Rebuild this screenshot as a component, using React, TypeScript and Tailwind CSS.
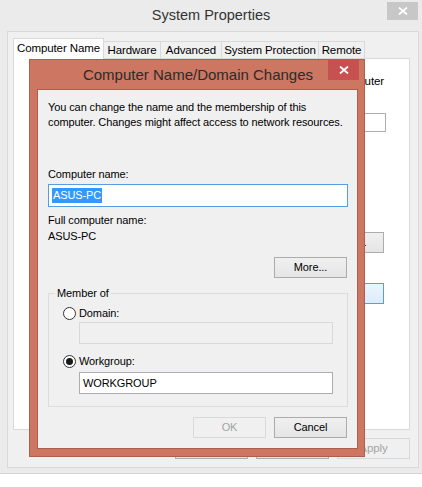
import React from 'react'

function CloseGlyph({ size = 10 }: { size?: number }) {
  return (
    <svg width={size} height={size - 2} viewBox="0 0 10 8" fill="none">
      <path d="M1 0.5 L9 7.5 M9 0.5 L1 7.5" stroke="#ffffff" strokeWidth="1.8" />
    </svg>
  )
}

function Btn({ children, disabled, className = '' }: { children: React.ReactNode; disabled?: boolean; className?: string }) {
  return (
    <div
      className={
        'flex h-[21px] w-[73px] shrink-0 items-center justify-center border ' +
        (disabled
          ? 'border-[#d9d9d9] bg-[#f0f0f0] text-[#a3a3a3] '
          : 'border-[#acacac] bg-linear-to-b from-[#f0f0f0] to-[#e5e5e5] text-black ') +
        className
      }
    >
      {children}
    </div>
  )
}

function Radio({ checked }: { checked?: boolean }) {
  return (
    <div className="flex h-[13px] w-[13px] shrink-0 items-center justify-center rounded-full border border-[#333333] bg-white">
      {checked && <div className="h-[7px] w-[7px] rounded-full bg-[#1a1a1a]" />}
    </div>
  )
}

const tabs = [
  { label: 'Hardware', w: 'w-[57px]' },
  { label: 'Advanced', w: 'w-[61px]' },
  { label: 'System Protection', w: 'w-[97px]' },
  { label: 'Remote', w: 'w-[46px]' },
]

export default function App() {
  return (
    <div className="relative h-[487px] w-[422px] overflow-hidden bg-white font-['Liberation_Sans',Arial,sans-serif] text-[11px] leading-[15px] tracking-[-0.1px] text-black">
      {/* System Properties window (inactive, behind) */}
      <div className="flex h-[474px] flex-col border-b border-[#d4d4d4] bg-[#ebebeb]">
        <div className="relative flex h-[31px] shrink-0 items-center justify-center text-[14.5px] tracking-normal text-[#333333]">
          System Properties
          <div className="absolute right-[4px] top-[2px] flex h-[18px] w-[31px] items-center justify-center bg-[#c7c7c7]">
            <CloseGlyph />
          </div>
        </div>

        <div className="ml-[7px] flex h-[437px] w-[412px] flex-col border border-[#d9d9d9] bg-[#f0f0f0] pb-[8px] pl-[5px] pr-[8px] pt-[6px]">
          {/* tab strip */}
          <div className="relative z-10 flex h-[20px] items-end whitespace-nowrap text-[11.5px]">
            <div className="-mb-px flex h-[21px] w-[91px] items-center justify-center border border-b-0 border-[#d9d9d9] bg-white pb-[2px]">
              Computer Name
            </div>
            {tabs.map((t) => (
              <div
                key={t.label}
                className={'flex h-[17px] items-center justify-center border-r border-t border-[#d9d9d9] bg-[#f0f0f0] ' + t.w}
              >
                {t.label}
              </div>
            ))}
          </div>

          {/* tab panel, mostly covered by the dialog */}
          <div className="flex h-[372px] flex-col items-end border border-[#d9d9d9] bg-white pr-[25px] text-[11.5px]">
            <div className="mt-[15px] whitespace-nowrap">computer</div>
            <div className="-mr-[2px] mt-[24px] h-[19px] w-[250px] border border-[#abadb3] bg-white" />
            <div className="mt-[100px] flex h-[21px] w-[100px] items-center justify-center border border-[#acacac] bg-linear-to-b from-[#f0f0f0] to-[#e5e5e5]">
              Network ID...
            </div>
            <div className="mt-[30px] flex h-[21px] w-[100px] items-center justify-center border border-[#569de5] bg-linear-to-b from-[#ecf4fc] to-[#dcecfc]">
              Change...
            </div>
          </div>

          <div className="mt-[8px] flex justify-end gap-[8px] text-[11.5px]">
            <Btn>OK</Btn>
            <Btn>Cancel</Btn>
            <Btn disabled>Apply</Btn>
          </div>
        </div>
      </div>

      {/* Computer Name/Domain Changes dialog (active, on top) */}
      <div className="absolute left-[29px] top-[59px] flex h-[398px] w-[336px] flex-col border border-[#a9604f] bg-[#cd7661] pb-[7px] pl-[7px] pr-[6px]">
        <div className="relative flex h-[29px] shrink-0 items-center justify-center pl-[1px] text-[15px] tracking-normal text-[#2b2b2b]">
          Computer Name/Domain Changes
          <div className="absolute -right-[1px] top-0 flex h-[20px] w-[31px] items-center justify-center bg-[#c75050]">
            <CloseGlyph />
          </div>
        </div>

        <div className="flex h-[360px] flex-col border border-[#a9604f] bg-[#f0f0f0] pl-[10px] pt-[10px]">
          <div className="whitespace-nowrap">You can change the name and the membership of this</div>
          <div className="whitespace-nowrap">computer. Changes might affect access to network resources.</div>

          <div className="mt-[37px]">Computer name:</div>
          <div className="mt-[2px] flex h-[23px] w-[300px] items-center border border-[#569de5] bg-white pl-[3px]">
            <span className="bg-[#3399ff] px-[1px] text-white">ASUS-PC</span>
          </div>

          <div className="mt-[6px]">Full computer name:</div>
          <div className="mt-[1px]">ASUS-PC</div>

          <div className="mt-[13px] flex w-[300px] justify-end pr-[1px]">
            <Btn>More...</Btn>
          </div>

          <fieldset className="mt-[8px] w-[300px] border border-[#dcdcdc] pb-[12px] pl-[14px]">
            <legend className="-ml-[8px] px-[2px] leading-[15px]">Member of</legend>
            <div className="mt-[5px] flex h-[15px] items-center gap-[3px]">
              <Radio />
              <span>Domain:</span>
            </div>
            <div className="ml-[16px] mt-[1px] h-[22px] w-[254px] border border-[#d9d9d9] bg-[#f0f0f0]" />
            <div className="mt-[10px] flex h-[15px] items-center gap-[3px]">
              <Radio checked />
              <span>Workgroup:</span>
            </div>
            <div className="ml-[16px] mt-[3px] flex h-[22px] w-[254px] items-center border border-[#abadb3] bg-white pl-[3px]">
              WORKGROUP
            </div>
          </fieldset>

          <div className="mt-[10px] flex w-[300px] justify-end gap-[8px] pr-[1px]">
            <Btn disabled>OK</Btn>
            <Btn>Cancel</Btn>
          </div>
        </div>
      </div>
    </div>
  )
}
